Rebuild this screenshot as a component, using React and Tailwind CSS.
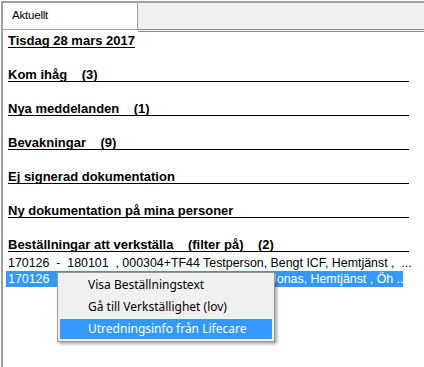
import React from 'react';

const headings = [
  ['Kom ihåg', '(3)'],
  ['Nya meddelanden', '(1)'],
  ['Bevakningar', '(9)'],
  ['Ej signerad dokumentation', ''],
  ['Ny dokumentation på mina personer', ''],
  ['Beställningar att verkställa    (filter på)', '(2)'],
];

export default function App() {
  return (
    <div className="relative w-[424px] h-[367px] bg-white pt-[1px] pl-[1px] overflow-hidden font-['Liberation_Sans',Arial,sans-serif] text-black">
      <div className="h-full border-l-2 border-t-2 border-[#a0a0a0] flex flex-col">
        {/* tab strip */}
        <div className="flex items-start h-[29px]">
          <div className="w-[135px] h-[27px] bg-white border-r border-b border-[#a0a0a0] pl-[9px] flex items-center text-[11.5px] tracking-[-0.2px]">
            Aktuellt
          </div>
          <div className="flex-1 h-[29px] bg-[#f0f0f0] border-b-[3px] border-double border-[#8c8c8c]" />
        </div>

        <div className="pl-[5px] text-[13px]">
          <div className="mt-[2px] w-fit h-[14px] leading-[13px] font-bold border-b border-black">
            Tisdag 28 mars 2017
          </div>

          {headings.map(([label, count]) => (
            <div
              key={label}
              className="mt-[20px] w-[401px] h-[14px] leading-[13px] font-bold border-b border-black whitespace-pre"
            >
              {label}
              {count && '    ' + count}
            </div>
          ))}

          <div className="mt-[3px] h-[16px] leading-[16px] text-[12.4px] whitespace-pre">
            170126  -  180101  , 000304+TF44 Testperson, Bengt ICF, Hemtjänst ,  ...
          </div>
          <div className="-ml-[2px] pl-[2px] w-[397px] h-[16px] leading-[16px] text-[12.4px] whitespace-pre bg-[#3399ff] text-white overflow-hidden">
            170126  -  180101  , 000305+TF44 Testperson, Jonas, Hemtjänst , Öh ...
          </div>
        </div>
      </div>

      {/* context menu */}
      <div className="absolute left-[57px] top-[272px] w-[218px] py-[1px] bg-[#f0f0f0] border border-[#979797] shadow-[2px_2px_3px_rgba(0,0,0,0.35)] font-['Noto_Sans',sans-serif] text-[12px]">
        <div className="h-[22px] pl-[30px] flex items-center">Visa Beställningstext</div>
        <div className="h-[22px] pl-[30px] flex items-center">Gå till Verkställighet (lov)</div>
        <div className="mx-[2px] my-[1px] h-[20px] pl-[28px] flex items-center bg-[#3399ff] text-white">
          Utredningsinfo från Lifecare
        </div>
      </div>
    </div>
  );
}
